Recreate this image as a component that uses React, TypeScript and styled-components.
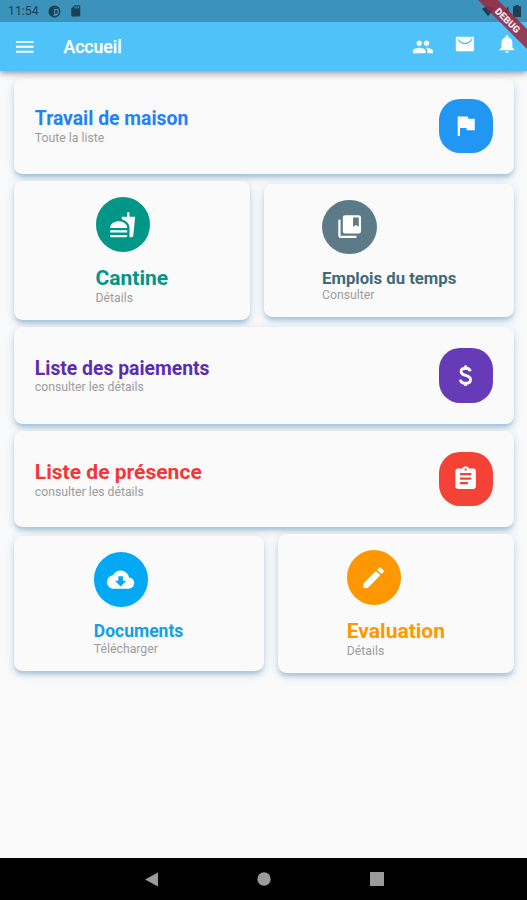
import React from 'react';
import styled, { createGlobalStyle } from 'styled-components';
import {
  MdAssignment,
  MdCloudDownload,
  MdEdit,
  MdFastfood,
  MdFlag,
  MdMenu,
  MdNotifications,
  MdSdStorage,
} from 'react-icons/md';

const GlobalStyle = createGlobalStyle`
  * { box-sizing: border-box; }
  body {
    margin: 0;
    background: #fafafa;
    font-family: Roboto, "Liberation Sans", sans-serif;
  }
`;

const Screen = styled.div`
  position: relative;
  display: flex;
  flex-direction: column;
  width: 527px;
  height: 900px;
  overflow: hidden;
  background: #fafafa;
`;

const StatusBar = styled.div`
  display: flex;
  align-items: center;
  justify-content: space-between;
  flex: none;
  height: 22px;
  padding: 0 6px 0 8px;
  background: #3b93bb;
  color: #1b4052;
  z-index: 2;
`;

const StatusGroup = styled.div<{ $gap: number }>`
  display: flex;
  align-items: center;
  gap: ${(p) => p.$gap}px;
`;

const Clock = styled.span`
  font-size: 12.3px;
  line-height: 22px;
  margin-right: 1px;
`;

const AppBar = styled.header`
  display: flex;
  align-items: center;
  flex: none;
  height: 49px;
  padding: 0 9px 0 13px;
  background: #4fc3f9;
  color: #fff;
  box-shadow: 0 2px 4px -1px rgba(0, 0, 0, 0.2), 0 4px 5px rgba(0, 0, 0, 0.14),
    0 1px 10px rgba(0, 0, 0, 0.12);
  z-index: 1;
`;

const AppTitle = styled.h1`
  flex: 1;
  margin: 2px 0 0 27px;
  font-size: 17.6px;
  line-height: 21px;
  font-weight: 500;
  -webkit-text-stroke: 0.25px #fff;
`;

const Actions = styled.div`
  display: flex;
  align-items: center;
  gap: 20.5px;
`;

const RaisedIcon = styled.span`
  display: flex;
  margin-bottom: 6px;
`;

const Board = styled.main`
  display: flex;
  flex-direction: column;
  flex: 1;
  gap: 7px;
  padding: 6.6px 12.8px 0 13.5px;
`;

const Row = styled.div<{ $columns: string }>`
  display: grid;
  grid-template-columns: ${(p) => p.$columns};
  align-items: center;
  gap: 14px;
`;

const Card = styled.section`
  border-radius: 8.5px;
  background: #fafafa;
  box-shadow: 0 4px 4px -1px rgba(70, 130, 180, 0.36), 0 3px 11px rgba(70, 130, 180, 0.22);
`;

const WideCard = styled(Card)`
  display: flex;
  align-items: center;
  justify-content: space-between;
  height: 96.7px;
  padding: 0 21px 0 21.3px;
`;

const TileCard = styled(Card)`
  display: flex;
  justify-content: center;
  padding: 15.9px 0 14.7px;
`;

const TileBody = styled.div`
  display: flex;
  flex-direction: column;
  align-items: flex-start;
`;

const Badge = styled.div<{ $color: string; $round?: boolean }>`
  display: flex;
  align-items: center;
  justify-content: center;
  width: 54.6px;
  height: 54.6px;
  border-radius: ${(p) => (p.$round ? '50%' : '21px')};
  background: ${(p) => p.$color};
  color: #fff;
`;

const Label = styled.div<{ $top?: number }>`
  margin-top: ${(p) => p.$top ?? 1.8}px;
`;

const Title = styled.h2<{ $color: string; $size: number }>`
  margin: 0;
  color: ${(p) => p.$color};
  font-size: ${(p) => p.$size}px;
  line-height: 1.172;
  font-weight: 700;
  white-space: nowrap;
`;

const Subtitle = styled.p`
  margin: 0;
  color: #9c9c9c;
  font-size: 12.25px;
  line-height: 14.3px;
`;

const NavBar = styled.nav`
  display: flex;
  align-items: center;
  justify-content: space-between;
  flex: none;
  height: 42px;
  padding: 0 143px 0 144.5px;
  background: #000;
`;

const Ribbon = styled.div`
  position: absolute;
  top: 12.7px;
  right: -30.5px;
  width: 100px;
  height: 14px;
  transform: rotate(45deg);
  background: rgba(158, 40, 62, 0.86);
  color: #f3e6ea;
  font-size: 9.6px;
  line-height: 15px;
  font-weight: 900;
  text-align: center;
  z-index: 3;
`;

type IconProps = { size: number };

const icon = (d: string) => ({ size }: IconProps) => (
  <svg width={size} height={size} viewBox="0 0 24 24" fill="currentColor">
    <path fillRule="evenodd" d={d} />
  </svg>
);

const PeopleIcon = icon(
  'M16 11c1.66 0 2.99-1.34 2.99-3S17.66 5 16 5s-3 1.34-3 3 1.34 3 3 3zM8 11c1.66 0 2.99-1.34 2.99-3S9.66 5 8 5 5 6.34 5 8s1.34 3 3 3zM8 13c-2.33 0-7 1.17-7 3.5V19h14v-2.5C15 14.17 10.33 13 8 13zM16 13c-.29 0-.62.02-.97.05C16.19 13.89 17 15.02 17 16.5V19h6v-2.5c0-2.33-4.67-3.5-7-3.5z',
);
const MailIcon = icon('M2 4h20v16H2zM4 6v1.6q8 9.6 16 0V6q-8 9.4-16 0z');
const BookIcon = icon(
  'M4 6H2v14a2 2 0 0 0 2 2h14v-2H4zM20 2H8a2 2 0 0 0-2 2v12a2 2 0 0 0 2 2h12a2 2 0 0 0 2-2V4a2 2 0 0 0-2-2zM20 12l-2.5-1.5L15 12V4h5z',
);

const DollarIcon = ({ size }: IconProps) => (
  <svg width={size} height={size} viewBox="0 0 24 24" fill="none" stroke="currentColor" strokeWidth="2.5">
    <path d="M16 8.2C15.7 6.2 14.1 5.5 12 5.5S8 6.5 8 8.5c0 4.3 8.3 2.2 8.3 7 0 2.1-1.9 3.2-4.3 3.2-2.6 0-4.4-1.1-4.6-3.3M12 3v3M12 18v3" />
  </svg>
);

type Item = {
  title: string;
  note: string;
  color: string;
  ink?: string;
  size: number;
  icon: React.ComponentType<IconProps>;
};

const Wide = ({ title, note, color, ink, size, icon: Icon }: Item) => (
  <WideCard>
    <Label>
      <Title $color={ink ?? color} $size={size}>{title}</Title>
      <Subtitle>{note}</Subtitle>
    </Label>
    <Badge $color={color}><Icon size={27.3} /></Badge>
  </WideCard>
);

const Tile = ({ title, note, color, ink, size, icon: Icon }: Item) => (
  <TileCard>
    <TileBody>
      <Badge $color={color} $round><Icon size={27.3} /></Badge>
      <Label $top={14.5}>
        <Title $color={ink ?? color} $size={size}>{title}</Title>
        <Subtitle>{note}</Subtitle>
      </Label>
    </TileBody>
  </TileCard>
);

export default function App() {
  return (
    <>
      <GlobalStyle />
      <Screen>
        <StatusBar>
          <StatusGroup $gap={8}>
            <Clock>11:54</Clock>
            <svg width="13" height="13" viewBox="0 0 13 13">
              <circle cx="6.5" cy="6.5" r="5.3" fill="none" stroke="currentColor" strokeWidth="1.4" />
              <path d="M1.3 4.5 3 2.2h7L9.5 4H6v5.5L4.5 11.5 1.5 9z" fill="currentColor" />
              <path d="M7.2 5.2h2.6v2.3H8.6v1.6H7.2z" fill="currentColor" />
            </svg>
            <MdSdStorage size={13.5} />
          </StatusGroup>
          <StatusGroup $gap={4}>
            <svg width="12" height="11" viewBox="0 0 13 11">
              <path d="M0 2.6Q6.5-2.2 13 2.6L6.5 10.6z" fill="currentColor" />
            </svg>
            <svg width="11" height="11" viewBox="0 0 10 11">
              <path d="M0 10.5 10 .5v10z" fill="currentColor" />
            </svg>
            <svg width="8" height="12" viewBox="0 0 8 12">
              <path d="M2.5 0h3v1.3H8V12H0V1.3h2.5z" fill="currentColor" />
            </svg>
          </StatusGroup>
        </StatusBar>
        <AppBar>
          <MdMenu size={23.5} />
          <AppTitle>Accueil</AppTitle>
          <Actions>
            <PeopleIcon size={21.8} />
            <RaisedIcon><MailIcon size={21.8} /></RaisedIcon>
            <RaisedIcon><MdNotifications size={21.8} /></RaisedIcon>
          </Actions>
        </AppBar>
        <Board>
          <Wide title="Travail de maison" note="Toute la liste" color="#2196f3" ink="#2380f8" size={19.35} icon={MdFlag} />
          <Row $columns="236.5fr 250fr">
            <Tile title="Cantine" note="Détails" color="#009688" size={21} icon={MdFastfood} />
            <Tile title="Emplois du temps" note="Consulter" color="#5c7a88" ink="#3f6a7c" size={16.7} icon={BookIcon} />
          </Row>
          <Wide title="Liste des paiements" note="consulter les détails" color="#673ab7" ink="#5a2cb0" size={19.35} icon={DollarIcon} />
          <Wide title="Liste de présence" note="consulter les détails" color="#f44336" ink="#f2373a" size={21.05} icon={MdAssignment} />
          <Row $columns="250fr 236.5fr">
            <Tile title="Documents" note="Télécharger" color="#03a9f4" ink="#129fe6" size={17.5} icon={MdCloudDownload} />
            <Tile title="Evaluation" note="Détails" color="#ff9800" size={21} icon={MdEdit} />
          </Row>
        </Board>
        <NavBar>
          <svg width="13" height="15" viewBox="0 0 13 15"><path d="M0 7.5 13 .5v14z" fill="#9b9b9b" /></svg>
          <svg width="14" height="14" viewBox="0 0 14 14"><circle cx="7" cy="7" r="6.7" fill="#9b9b9b" /></svg>
          <svg width="14" height="14" viewBox="0 0 14 14"><path d="M0 0h14v14H0z" fill="#9b9b9b" /></svg>
        </NavBar>
        <Ribbon>DEBUG</Ribbon>
      </Screen>
    </>
  );
}
